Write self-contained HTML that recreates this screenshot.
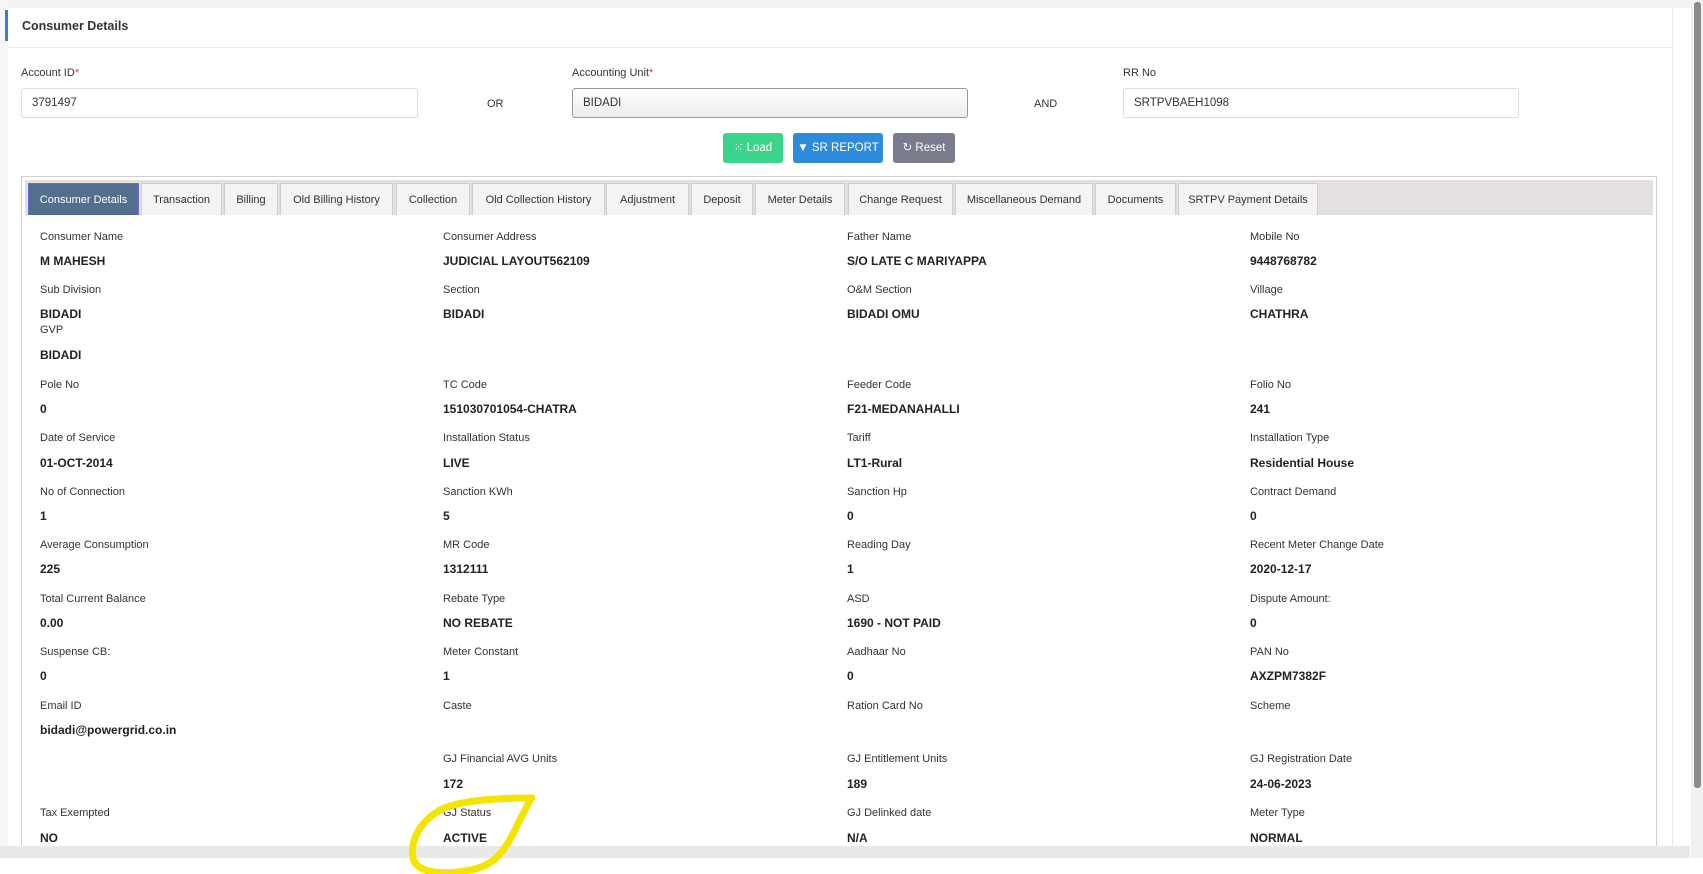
<!DOCTYPE html>
<html><head><meta charset="utf-8"><style>
*{box-sizing:border-box;margin:0;padding:0}
body{width:1703px;height:874px;background:#fff;font-family:"Liberation Sans",sans-serif;color:#212529;position:relative;overflow:hidden}
.a{position:absolute;white-space:nowrap}
.l{font-size:11px;color:#333}
.v{font-size:12px;font-weight:bold;color:#222}
.inp{position:absolute;height:30px;border:1px solid #dcdcdc;border-radius:3px;font-size:11.5px;padding:8px 10px;color:#333}
.btn{position:absolute;top:133px;height:30px;border-radius:3px;color:#fff;font-size:11.5px;line-height:30px;text-align:center}
.tab{position:absolute;top:183px;height:32px;background:#f4f4f4;border:1px solid #cfcfcf;border-bottom:none;font-size:11px;line-height:32px;text-align:center;color:#333}
.star{color:#e53935}
</style></head><body>
<div class="a" style="left:0;top:0;width:1703px;height:8px;background:#f2f2f2"></div>
<div class="a" style="left:0;top:0;width:8px;height:874px;background:#f7f7f7"></div>
<div class="a" style="left:5px;top:10px;width:3px;height:31px;background:#3f7dc0"></div>
<div class="a" style="left:22px;top:19px;font-size:12.5px;font-weight:bold;color:#333">Consumer Details</div>
<div class="a" style="left:8px;top:47px;width:1664px;height:1px;background:#eaeaea"></div>
<div class="a" style="left:1672px;top:8px;width:1px;height:840px;background:#eaeaea"></div>
<div class="a" style="left:1691px;top:0;width:12px;height:874px;background:#f1f1f1"></div>
<div class="a" style="left:1694px;top:2px;width:7px;height:786px;background:#8a8a8a;border-radius:3px"></div>

<div class="a l" style="left:21px;top:67px">Account ID<span class="star">*</span></div>
<div class="inp" style="left:21px;top:88px;width:397px">3791497</div>
<div class="a l" style="left:487px;top:98px">OR</div>
<div class="a l" style="left:572px;top:67px">Accounting Unit<span class="star">*</span></div>
<div class="inp" style="left:572px;top:88px;width:396px;border-color:#999;background:linear-gradient(#fff,#ececec)">BIDADI</div>
<div class="a l" style="left:1034px;top:98px">AND</div>
<div class="a l" style="left:1123px;top:67px">RR No</div>
<div class="inp" style="left:1123px;top:88px;width:396px">SRTPVBAEH1098</div>

<div class="btn" style="left:723px;width:60px;background:#3ad48d">&#8281; Load</div>
<div class="btn" style="left:793px;width:90px;background:#2e8bdb">&#9660; SR REPORT</div>
<div class="btn" style="left:893px;width:62px;background:#7a7b8c">&#8635; Reset</div>

<div class="a" style="left:21px;top:176px;width:1636px;height:680px;border:1px solid #cfcfcf"></div>
<div class="a" style="left:25px;top:180px;width:1628px;height:35px;background:#e3e0df"></div>
<div class="tab" style="left:28px;width:111px;background:#546e8e;color:#fff;border-color:#6b6bd8">Consumer Details</div>
<div class="tab" style="left:141px;width:81px">Transaction</div>
<div class="tab" style="left:224px;width:54px">Billing</div>
<div class="tab" style="left:280px;width:113px">Old Billing History</div>
<div class="tab" style="left:396px;width:74px">Collection</div>
<div class="tab" style="left:472px;width:133px">Old Collection History</div>
<div class="tab" style="left:606px;width:83px">Adjustment</div>
<div class="tab" style="left:691px;width:62px">Deposit</div>
<div class="tab" style="left:755px;width:90px">Meter Details</div>
<div class="tab" style="left:848px;width:105px">Change Request</div>
<div class="tab" style="left:955px;width:138px">Miscellaneous Demand</div>
<div class="tab" style="left:1095px;width:81px">Documents</div>
<div class="tab" style="left:1178px;width:140px">SRTPV Payment Details</div>

<div class="a l" style="left:40px;top:231px">Consumer Name</div><div class="a v" style="left:40px;top:254px">M MAHESH</div>
<div class="a l" style="left:443px;top:231px">Consumer Address</div><div class="a v" style="left:443px;top:254px">JUDICIAL LAYOUT562109</div>
<div class="a l" style="left:847px;top:231px">Father Name</div><div class="a v" style="left:847px;top:254px">S/O LATE C MARIYAPPA</div>
<div class="a l" style="left:1250px;top:231px">Mobile No</div><div class="a v" style="left:1250px;top:254px">9448768782</div>

<div class="a l" style="left:40px;top:284px">Sub Division</div><div class="a v" style="left:40px;top:307px">BIDADI</div>
<div class="a l" style="left:443px;top:284px">Section</div><div class="a v" style="left:443px;top:307px">BIDADI</div>
<div class="a l" style="left:847px;top:284px">O&amp;M Section</div><div class="a v" style="left:847px;top:307px">BIDADI OMU</div>
<div class="a l" style="left:1250px;top:284px">Village</div><div class="a v" style="left:1250px;top:307px">CHATHRA</div>
<div class="a l" style="left:40px;top:324px">GVP</div><div class="a v" style="left:40px;top:348px">BIDADI</div>

<div class="a l" style="left:40px;top:379px">Pole No</div><div class="a v" style="left:40px;top:402px">0</div>
<div class="a l" style="left:443px;top:379px">TC Code</div><div class="a v" style="left:443px;top:402px">151030701054-CHATRA</div>
<div class="a l" style="left:847px;top:379px">Feeder Code</div><div class="a v" style="left:847px;top:402px">F21-MEDANAHALLI</div>
<div class="a l" style="left:1250px;top:379px">Folio No</div><div class="a v" style="left:1250px;top:402px">241</div>

<div class="a l" style="left:40px;top:432px">Date of Service</div><div class="a v" style="left:40px;top:456px">01-OCT-2014</div>
<div class="a l" style="left:443px;top:432px">Installation Status</div><div class="a v" style="left:443px;top:456px">LIVE</div>
<div class="a l" style="left:847px;top:432px">Tariff</div><div class="a v" style="left:847px;top:456px">LT1-Rural</div>
<div class="a l" style="left:1250px;top:432px">Installation Type</div><div class="a v" style="left:1250px;top:456px">Residential House</div>

<div class="a l" style="left:40px;top:486px">No of Connection</div><div class="a v" style="left:40px;top:509px">1</div>
<div class="a l" style="left:443px;top:486px">Sanction KWh</div><div class="a v" style="left:443px;top:509px">5</div>
<div class="a l" style="left:847px;top:486px">Sanction Hp</div><div class="a v" style="left:847px;top:509px">0</div>
<div class="a l" style="left:1250px;top:486px">Contract Demand</div><div class="a v" style="left:1250px;top:509px">0</div>

<div class="a l" style="left:40px;top:539px">Average Consumption</div><div class="a v" style="left:40px;top:562px">225</div>
<div class="a l" style="left:443px;top:539px">MR Code</div><div class="a v" style="left:443px;top:562px">1312111</div>
<div class="a l" style="left:847px;top:539px">Reading Day</div><div class="a v" style="left:847px;top:562px">1</div>
<div class="a l" style="left:1250px;top:539px">Recent Meter Change Date</div><div class="a v" style="left:1250px;top:562px">2020-12-17</div>

<div class="a l" style="left:40px;top:593px">Total Current Balance</div><div class="a v" style="left:40px;top:616px">0.00</div>
<div class="a l" style="left:443px;top:593px">Rebate Type</div><div class="a v" style="left:443px;top:616px">NO REBATE</div>
<div class="a l" style="left:847px;top:593px">ASD</div><div class="a v" style="left:847px;top:616px">1690 - NOT PAID</div>
<div class="a l" style="left:1250px;top:593px">Dispute Amount:</div><div class="a v" style="left:1250px;top:616px">0</div>

<div class="a l" style="left:40px;top:646px">Suspense CB:</div><div class="a v" style="left:40px;top:669px">0</div>
<div class="a l" style="left:443px;top:646px">Meter Constant</div><div class="a v" style="left:443px;top:669px">1</div>
<div class="a l" style="left:847px;top:646px">Aadhaar No</div><div class="a v" style="left:847px;top:669px">0</div>
<div class="a l" style="left:1250px;top:646px">PAN No</div><div class="a v" style="left:1250px;top:669px">AXZPM7382F</div>

<div class="a l" style="left:40px;top:700px">Email ID</div><div class="a v" style="left:40px;top:723px">bidadi@powergrid.co.in</div>
<div class="a l" style="left:443px;top:700px">Caste</div>
<div class="a l" style="left:847px;top:700px">Ration Card No</div>
<div class="a l" style="left:1250px;top:700px">Scheme</div>

<div class="a l" style="left:443px;top:753px">GJ Financial AVG Units</div><div class="a v" style="left:443px;top:777px">172</div>
<div class="a l" style="left:847px;top:753px">GJ Entitlement Units</div><div class="a v" style="left:847px;top:777px">189</div>
<div class="a l" style="left:1250px;top:753px">GJ Registration Date</div><div class="a v" style="left:1250px;top:777px">24-06-2023</div>

<div class="a l" style="left:40px;top:807px">Tax Exempted</div><div class="a v" style="left:40px;top:831px">NO</div>
<div class="a l" style="left:443px;top:807px">GJ Status</div><div class="a v" style="left:443px;top:831px">ACTIVE</div>
<div class="a l" style="left:847px;top:807px">GJ Delinked date</div><div class="a v" style="left:847px;top:831px">N/A</div>
<div class="a l" style="left:1250px;top:807px">Meter Type</div><div class="a v" style="left:1250px;top:831px">NORMAL</div>

<div class="a" style="left:0;top:846px;width:1690px;height:12px;background:#e9e9e9"></div>
<div class="a" style="left:0;top:858px;width:1703px;height:16px;background:#fff"></div>

<svg class="a" style="left:0;top:0" width="1703" height="874">
<path d="M532 798 C500 798 460 800 440 810 C420 822 410 840 413 858 C416 872 440 876 470 870 C495 866 505 850 515 830 C522 815 528 805 530 800" fill="none" stroke="#f5e400" stroke-width="7" stroke-linecap="round"/>
</svg>
</body></html>
